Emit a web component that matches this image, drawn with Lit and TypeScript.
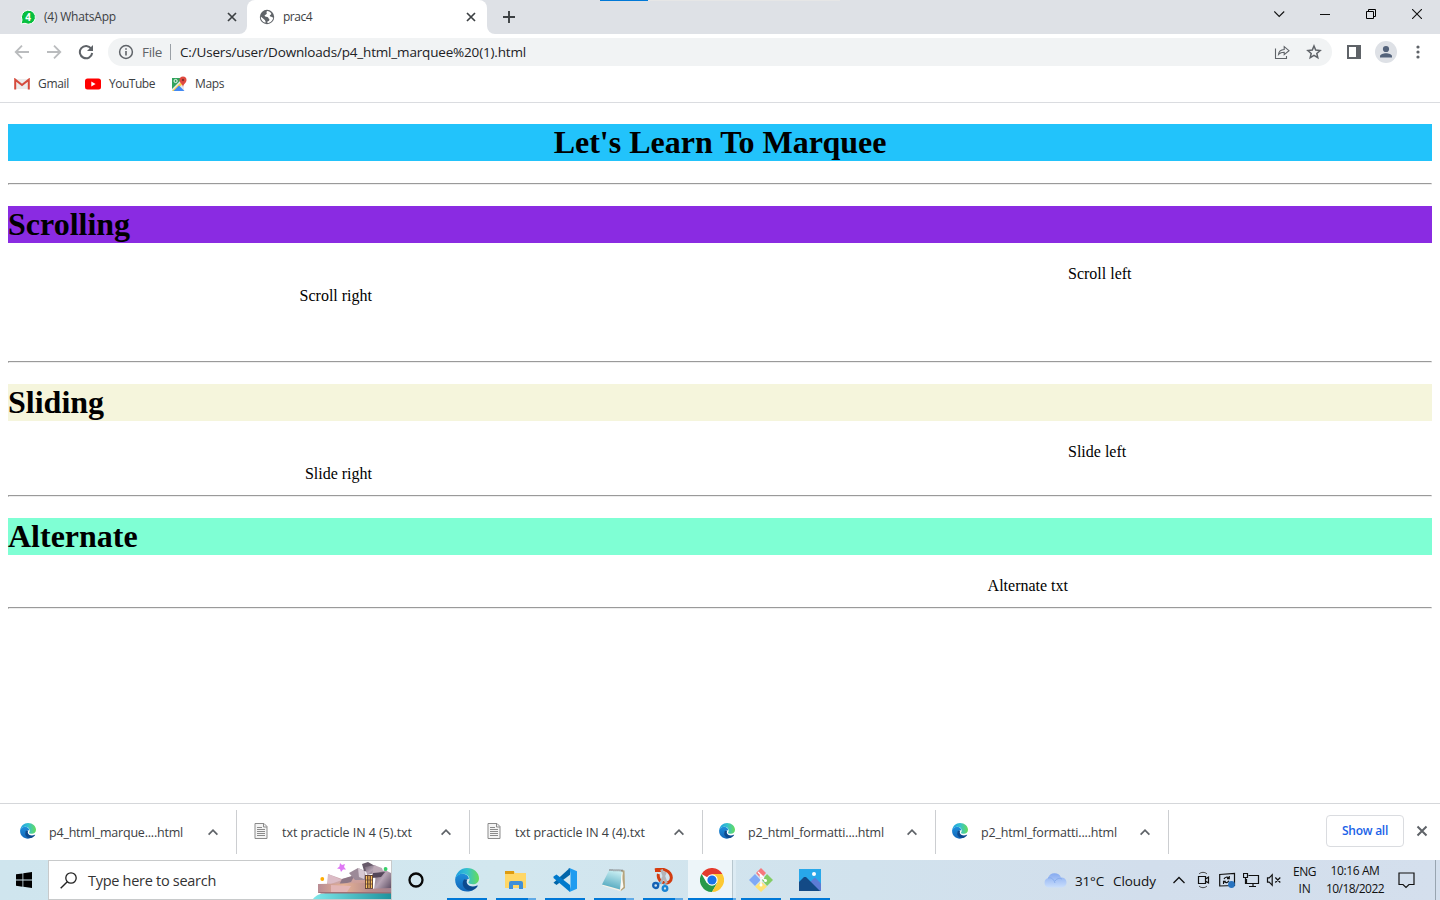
import { LitElement, html, css, svg } from "lit";
import { customElement, property } from "lit/decorators.js";

const UI_FONT = '"Open Sans", "Noto Sans", sans-serif';

/* A label whose tracking is derived from the width it has to fill. */
@customElement("fit-text")
class FitText extends LitElement {
  @property() text = "";
  @property({ type: Number }) width = 0;
  @property({ type: Number }) size = 12;
  @property({ type: Number }) weight = 400;
  static styles = css`
    :host { display: block; white-space: pre; flex: none; line-height: 16px; font-family: "Open Sans", "Noto Sans", sans-serif; }
    .t { display: block; }
  `;
  render() {
    const ctx = document.createElement("canvas").getContext("2d")!;
    ctx.font = `${this.weight} ${this.size}px ${UI_FONT}`;
    const natural = ctx.measureText(this.text).width;
    const spacing = (this.width - natural) / this.text.length;
    return html`<span class="t" style="width:${this.width}px;font-size:${this.size}px;font-weight:${this.weight};letter-spacing:${spacing.toFixed(3)}px">${this.text}</span>`;
  }
}

const label = (text: string, width: number, size = 12, weight = 400) =>
  html`<fit-text .text=${text} .width=${width} .size=${size} .weight=${weight}></fit-text>`;

const icon = (w: number, h: number, body: unknown) =>
  html`<svg class="icon" width=${w} height=${h} viewBox="0 0 ${w} ${h}" fill="none">${body}</svg>`;

const cross = (c = "#3c4043") => icon(10, 10, svg`<path d="M1 1l8 8M9 1l-8 8" stroke=${c} stroke-width="1.7"/>`);

const edge = (size: number, id: string) => html`<svg class="icon" width=${size} height=${size} viewBox="0 0 24 24">
  <defs>
    <linearGradient id="${id}a" x1="0" y1="0.3" x2="1" y2="0.3"><stop offset="0" stop-color="#1b9de2"/><stop offset=".5" stop-color="#35c1cf"/><stop offset="1" stop-color="#66dd58"/></linearGradient>
    <linearGradient id="${id}b" x1="0" y1="0" x2="0" y2="1"><stop offset="0" stop-color="#1f8fdc"/><stop offset="1" stop-color="#1266b8"/></linearGradient>
  </defs>
  <path fill="url(#${id}b)" d="M.2 11C.9 7.200 5 5.300 8.500 5.700c3.500.4 5.500 3 5.300 5.300-2.800-.6-5.600 1.400-5.300 4.600.4 4.500 5 7.300 9.500 6.300C10 26.500-.6 20.800.2 11z"/>
  <path fill="#0c4a8f" d="M9 11.500c-3.600 5 .6 12 8 10.900 2.400-.5 4.500-2.400 5.700-4.300.3-.5-.1-.8-.6-.5-4 2-8.600.9-10-2-.7-1.500-.4-3 .4-4.300z"/>
  <path fill="url(#${id}a)" d="M.2 11.200C1 4.600 6 .1 12 .1 19 .1 24 5 24 10.300c0 4-3 6-6 6-2.600 0-4.600-.9-4.600-1.700 0-.7 1.100-1 1.100-3.100C14.500 8 11.500 5.800 8 5.800c-3.800 0-6.500 2-7.800 5.400z"/>
</svg>`;

const notepage = () => icon(14, 16, svg`<path d="M1 .5h9l3 3v12H1z" fill="#f4f4f4" stroke="#8b8b8b"/><path d="M9.500 .5v3.500H13M3 4.500h5M3 6.500h8M3 8.500h8M3 10.500h8M3 12.500h8" stroke="#8b8b8b"/>`);
const chevron = () => icon(10, 7, svg`<path d="M.6 5.700L5 1.200 9.400 5.700" stroke="#5f6368" stroke-width="1.700"/>`);

@customElement("browser-chrome")
class BrowserChrome extends LitElement {
  static styles = css`
    :host { display: block; height: 103px; flex: none; color: #3c4043; }
    .icon { display: block; flex: none; }
    .strip { display: flex; height: 34px; background: #dee1e6; position: relative; }
    .load { position: absolute; left: 600px; top: 0; width: 48px; height: 1px; background: #0078d7; }
    .rest { position: absolute; left: 648px; top: 0; width: 192px; height: 1px; background: #e6e6e6; }
    .tab { display: flex; align-items: center; box-sizing: border-box; height: 34px; }
    .first { width: 247px; padding: 0 10px 0 20px; border-bottom-right-radius: 8px; background: #dee1e6; }
    .active { width: 240px; padding: 0 11px 0 12px; background: #fff; border-radius: 8px 8px 0 0; }
    .under { background: linear-gradient(#dee1e6 50%, #fff 50%); display: flex; }
    .after { display: flex; flex: 1; align-items: center; background: #dee1e6; border-bottom-left-radius: 8px; padding-left: 16px; }
    .name { margin-left: 8px; flex: 1; }
    .wide { flex: 1; }
    .win { display: flex; align-items: center; height: 28px; align-self: flex-start; padding-right: 18px; }
    .bar { display: flex; align-items: center; height: 36px; padding: 0 20px 0 14px; }
    .nav { display: flex; gap: 16px; align-items: center; }
    .omni { display: flex; flex: 1; align-items: center; box-sizing: border-box; height: 28px; border-radius: 14px; background: #f1f3f4; margin-left: 14px; padding: 0 10px 0 10px; }
    .omni .file { margin-left: 8px; color: #5f6368; }
    .sep { width: 1px; height: 16px; background: #9aa0a6; margin: 0 9px 0 8px; }
    .url { flex: 1; color: #202124; }
    .star { margin-left: 16px; }
    .side { margin-left: 15px; }
    .who { margin-left: 14px; }
    .dots { margin-left: 19px; }
    .marks { display: flex; align-items: center; height: 28px; padding: 0 14px 4px; border-bottom: 1px solid #dadce0; }
    .marks .a { margin: 0 16px 0 8px; }
    .marks .b { margin: 0 17px 0 8px; }
    .marks .c { margin-left: 8px; }
  `;
  render() {
    return html`
      <div class="strip">
        <div class="under">
          <div class="tab first">
            ${icon(16, 16, svg`<path d="M1 15l1-4A7 7 0 1 1 5 14.300z" fill="#08bf3f" stroke="#fff" stroke-width="1"/><text x="8" y="11.800" text-anchor="middle" font-size="10" font-weight="700" font-family="Open Sans, sans-serif" fill="#fff">4</text>`)}
            <div class="name">${label("(4) WhatsApp", 72)}</div>${cross()}
          </div>
          <div class="tab active">
            ${icon(16, 16, svg`<circle cx="8" cy="8" r="7.200" fill="#5f6368"/><path d="M8.200 2c-1 .7-.8 1.800-.2 2.200-.9.5-.6 1.500-1.600 1.600-1 .2-.8 1.300-.2 1.700 1.400.6 2.800-.1 3.200 1.600.1.800 1.200.7 1 1.600-.2 1-1 1.700-2 1.700V14c3.200-.3 5.600-2.600 5.800-5.600-1 .2-1.500-.5-2.400-.8-1-.2-1.400-1.200-.6-1.700.8-.5 1.300-.8 1-1.500C11.500 3.400 10 2 8.200 2zM1.800 7.500l3.700 3.200c.7.400.5 1 1 1.500v1.600C3.500 13 1.600 10.500 1.800 7.500z" fill="#fff"/>`)}
            <div class="name">${label("prac4", 29)}</div>${cross()}
          </div>
        </div>
        <div class="under wide"><div class="after">
          ${icon(12, 12, svg`<path d="M6 0v12M0 6h12" stroke="#3c4043" stroke-width="1.900"/>`)}
          <span class="wide"></span>
          <div class="win">${icon(138, 12, svg`<path d="M.3 3.500L5.200 8.500 10.200 3.500M46 6.500h10" stroke="#111" stroke-width="1.100"/><path d="M92.500 3.500h7v7h-7zM94.500 3.500v-2h7v7h-2" stroke="#000"/>`)}
            ${icon(10, 10, svg`<path d="M0 0l10 10M10 0L0 10" stroke="#111" stroke-width="1.100"/>`)}
          </div>
        </div></div>
        <i class="load"></i><i class="rest"></i>
      </div>
      <div class="bar">
        <div class="nav">
          ${icon(16, 16, svg`<path d="M15 8H2M8 1.700L1.700 8 8 14.300" stroke="#babcbe" stroke-width="1.800"/>`)}
          ${icon(16, 16, svg`<path d="M1 8h13M8 1.700L14.300 8 8 14.300" stroke="#babcbe" stroke-width="1.800"/>`)}
          ${icon(16, 16, svg`<path d="M13.200 4.600A6.200 6.200 0 1 0 14.200 9" stroke="#5f6368" stroke-width="2"/><path d="M15 1v6H9z" fill="#5f6368"/>`)}
        </div>
        <div class="omni">
          ${icon(16, 16, svg`<circle cx="8" cy="8" r="6.400" stroke="#5f6368" stroke-width="1.500"/><path d="M8 7v4.500M8 4.200v1.600" stroke="#5f6368" stroke-width="1.600"/>`)}
          <div class="file">${label("File", 20, 13.5)}</div><i class="sep"></i>
          <div class="url">${label("C:/Users/user/Downloads/p4_html_marquee%20(1).html", 346, 13.5)}</div>
          ${icon(16, 16, svg`<path d="M1.500 4.500v10h11v-2.500" stroke="#5f6368" stroke-width="1.100"/><path d="M4.500 10.500c.3-3.200 2.200-4.800 5.700-5V2.700L15 6.700l-4.800 4V8.200c-2.600 0-4.200.6-5.700 2.300z" stroke="#5f6368" stroke-width="1.100"/>`)}
          <div class="star">${icon(16, 16, svg`<path d="M8 2l1.700 4.100 4.400.4-3.300 2.900 1 4.300L8 11.400l-3.800 2.300 1-4.300-3.300-2.900 4.400-.4z" stroke="#5f6368" stroke-width="1.500"/>`)}</div>
        </div>
        <div class="side">${icon(14, 14, svg`<path d="M0 0h14v14H0zM2 2v10h7V2z" fill="#5f6368" fill-rule="evenodd"/>`)}</div>
        <div class="who">${icon(22, 22, svg`<circle cx="11" cy="11" r="11" fill="#dee1e6"/><circle cx="11" cy="8" r="3.100" fill="#53627a"/><path d="M5 16.500v-1.200c0-2 3.500-3 6-3s6 1 6 3v1.200z" fill="#53627a"/>`)}</div>
        <div class="dots">${icon(4, 14, svg`<circle cx="2" cy="2" r="1.600" fill="#5f6368"/><circle cx="2" cy="7" r="1.600" fill="#5f6368"/><circle cx="2" cy="12" r="1.600" fill="#5f6368"/>`)}</div>
      </div>
      <div class="marks">
        ${icon(16, 12, svg`<path d="M1 1h14v10H1z" fill="#ececec"/><path d="M1.200 11.500V1.600L8 7l6.800-5.400v9.900" stroke="#d54b3d" stroke-width="2"/>`)}
        <div class="a">${label("Gmail", 31)}</div>
        ${icon(16, 12, svg`<rect y=".5" width="16" height="11" rx="2.500" fill="#f00"/><path d="M6.300 3.600v4.800L10.600 6z" fill="#fff"/>`)}
        <div class="b">${label("YouTube", 46)}</div>
        ${icon(15, 16, svg`<path d="M0 2h12v13H0z" fill="#e8eaed"/><path d="M0 2h11L0 13z" fill="#31a35c"/><path d="M0 15L12 3l2 2L3 15z" fill="#fdd249"/><path d="M1.500 15l5.500-5.500L12.500 15z" fill="#4289f2"/><circle cx="3.600" cy="5" r="1.600" stroke="#fff" stroke-width=".9"/><path d="M11 11c-.3-3-3.500-4-3.500-7a3.500 3.500 0 0 1 7 0c0 3-3.200 4-3.500 7z" fill="#e04a3f"/><circle cx="11" cy="4" r="1.200" fill="#882f28"/>`)}
        <div class="c">${label("Maps", 29)}</div>
      </div>`;
  }
}

@customElement("marquee-page")
class MarqueePage extends LitElement {
  static styles = css`
    :host { display: block; flex: 1; padding: 21px 8px 0; font: 16px/18px "Liberation Serif", serif; color: #000; background: #fff; }
    h1 { margin: 0; height: 37px; font: bold 32px/37px "Liberation Serif", serif; }
    hr { margin: 22px 0 21px; border: solid; border-width: 1px; border-color: #9a9a9a #eee #eee #9a9a9a; }
    .title { background: #22c3fb; text-align: center; }
    .scrolling { background: #8a2be2; }
    .sliding { background: #f5f5dc; }
    .alternate { background: #7fffd4; }
    .runs { display: grid; row-gap: 4px; padding-top: 22px; align-content: start; box-sizing: border-box; }
    .r1 { height: 96px; }
    .r2 { height: 52px; }
    .r3 { height: 30px; }
    .left { padding-left: 1060px; }
    .right { width: 364px; text-align: right; }
    .alt { width: 1060px; text-align: right; }
  `;
  render() {
    return html`
      <h1 class="title">Let's Learn To Marquee</h1><hr />
      <h1 class="scrolling">Scrolling</h1>
      <div class="runs r1"><div class="left">Scroll left</div><div class="right">Scroll right</div></div><hr />
      <h1 class="sliding">Sliding</h1>
      <div class="runs r2"><div class="left">Slide left</div><div class="right">Slide right</div></div><hr />
      <h1 class="alternate">Alternate</h1>
      <div class="runs r3"><div class="alt">Alternate txt</div></div><hr />`;
  }
}

@customElement("download-shelf")
class DownloadShelf extends LitElement {
  static styles = css`
    :host { display: flex; flex: none; box-sizing: border-box; height: 57px; border-top: 1px solid #d5d7da; align-items: center; background: #fff; color: #3c4043; padding-right: 12px; }
    .icon { display: block; flex: none; }
    .item { display: flex; align-items: center; box-sizing: border-box; width: 233px; height: 44px; border-right: 1px solid #ccced1; padding: 0 18px 0 16px; }
    .item:first-child { width: 237px; padding-left: 20px; }
    .pic { width: 16px; display: flex; justify-content: center; margin: 0 13px 2px 0; }
    .name { flex: 1; padding-top: 1px; }
    .gap { flex: 1; }
    .all { display: flex; align-items: center; justify-content: center; box-sizing: border-box; width: 78px; height: 32px; border: 1px solid #dadce0; border-radius: 4px; color: #1a62e8; margin: 0 12px 2px 0; }
    .shut { padding-bottom: 2px; }
  `;
  render() {
    const files: [string, number, boolean][] = [
      ["p4_html_marque....html", 134, true],
      ["txt practicle IN 4 (5).txt", 130, false],
      ["txt practicle IN 4 (4).txt", 130, false],
      ["p2_html_formatti....html", 136, true],
      ["p2_html_formatti....html", 136, true],
    ];
    return html`${files.map(([name, w, web], i) => html`<div class="item"><div class="pic">${web ? edge(16, "d" + i) : notepage()}</div><div class="name">${label(name, w, 12.5)}</div>${chevron()}</div>`)}
      <span class="gap"></span><div class="all">${label("Show all", 46, 12, 600)}</div><div class="shut">${icon(12, 12, svg`<path d="M1.500 1.500l9 9M10.500 1.500l-9 9" stroke="#5f6368" stroke-width="2"/>`)}</div>`;
  }
}

const apps = [
  edge(24, "tb"),
  icon(24, 24, svg`<path d="M1 3h9l1 2h11v15H1z" fill="#ffd668"/><path d="M1 3h9v3H1z" fill="#dd9b10"/><path d="M1 7h21v12H1z" fill="#ffd766"/><path d="M5 21v-6a2 2 0 0 1 2-2h10a2 2 0 0 1 2 2v6h-4v-4H9v4z" fill="#3f8fd8"/>`),
  icon(24, 24, svg`<path d="M17 0v6.800L3.500 17 .5 14.700 16.500.2z" fill="#0065a9"/><path d="M.5 8.500l3-2L17 17v7L.5 10z" fill="#007acc"/><path d="M16.500 0L24 3.200v17.600L16.500 24l1-6V6z" fill="#1f9cf0"/>`),
  html`<svg class="icon" width="24" height="24" viewBox="0 0 24 24" fill="none"><defs><linearGradient id="np" x1=".6" y1="0" x2=".3" y2="1"><stop stop-color="#c8eef2"/><stop offset="1" stop-color="#4aa3bb"/></linearGradient></defs><path d="M19 2l3.500.500.500 17.500-4.500 3.200z" fill="#b5a47c"/><path d="M0 17.500l18.500 5.700L21 4z" fill="#f5f2e8"/><path d="M7 2.500L20.500 3.500 18 21.500 0 16.500z" fill="url(#np)"/><path d="M19.500 4l2 15-3 3z" fill="#fbfaf4"/><path d="M7.500 2l14 .5" stroke="#777" stroke-dasharray="1 1" stroke-width="2"/></svg>`,
  icon(24, 24, svg`<path d="M4 2.200C12-.800 20 3 20.300 9.500c.2 4-3.300 6-7 5.300C8.500 14 6.500 9 7.500 6" stroke="#d23c10" stroke-width="3"/><path d="M4 .5h8v3.500H4z" fill="#d83b0d"/><path d="M10.500 1.500l5 14M14.500 4l-5 12" stroke="#b4b4b8" stroke-width="2.600"/><path d="M10 14.500l-3 1.500M13 15.500l1.500 3" stroke="#5bb8ed" stroke-width="2"/><circle cx="4.700" cy="17.500" r="2.500" stroke="#1461b4" stroke-width="2.300"/><circle cx="14" cy="20.500" r="2.300" stroke="#1984d4" stroke-width="2.300"/>`),
  icon(24, 24, svg`<circle cx="12" cy="12" r="12" fill="#fff"/><path d="M12 12L1.600 6A12 12 0 0 1 22.400 6z" fill="#e33b2e"/><path d="M1.600 6A12 12 0 0 0 12 24l5.200-9L12 12 6.800 15z" fill="#27984a"/><path d="M22.400 6H12l5.200 9L12 24A12 12 0 0 0 22.400 6z" fill="#fcc934"/><circle cx="12" cy="12" r="5.700" fill="#fff"/><circle cx="12" cy="12" r="4.600" fill="#1a73e8"/>`),
  icon(24, 24, svg`<path d="M12 0l5 5-5 5.500L7 5z" fill="#f7787c"/><path d="M6 6l5.500 6L6 18 0 12z" fill="#80a9f6"/><path d="M18 6l6 6-6 6-5-6z" fill="#83cd65"/><path d="M12 13.500l6 5-6 5.500-6-5.500z" fill="#ffe273"/><path d="M9 4l6 6M12 8v10M13 10l4 3" stroke="#fff" stroke-width="1.300"/><circle cx="12" cy="8" r="1.500" fill="#fff"/><circle cx="12" cy="17" r="1.500" fill="#fff"/><circle cx="16.500" cy="12.500" r="1.500" fill="#fff"/>`),
  icon(24, 24, svg`<path d="M1 1h22v22H1z" fill="#28a8ea"/><path d="M12 14l5-4.500 6 6V23H12z" fill="#5c7bd5"/><path d="M1 14l5-5 2 0 14 14H1z" fill="#134a86"/><circle cx="16" cy="6" r="2" fill="#fff"/>`),
];

@customElement("task-bar")
class TaskBar extends LitElement {
  static styles = css`
    :host { display: flex; flex: none; height: 40px; align-items: center; background: linear-gradient(90deg, #cfe5ee 0, #d2e7ef 35%, #d1e2ed 60%, #d2deec 80%, #d4dfed); color: #111; }
    .icon { display: block; flex: none; }
    .start { width: 48px; display: flex; justify-content: center; }
    .search { display: flex; align-items: center; box-sizing: border-box; width: 344px; height: 40px; border: 1px solid #c8cacb; background: #fff; padding-left: 11px; color: #333; }
    .query { margin-left: 11px; flex: 1; padding-top: 1px; }
    .cortana { width: 48px; display: flex; justify-content: center; margin-right: 7px; }
    .app { display: flex; flex: none; align-items: center; justify-content: center; width: 40px; height: 40px; margin-right: 9px; background: linear-gradient(#0078d7, #0078d7) 0 38px / 100% 2px no-repeat; }
    .multi { background: linear-gradient(90deg, #0078d7 32px, #60aae6 32px) 0 38px / 100% 2px no-repeat; }
    .on { width: 49px; margin: 0 4px 0 -4px; box-sizing: border-box; padding-right: 2px;
      background: linear-gradient(90deg, #0078d7 45px, #60aae6 45px) 0 38px / 48px 2px no-repeat, linear-gradient(90deg, #edf5f9 44px, #b7c7cf 44px, #b7c7cf 45px, #dcebf3 45px) 0 0 / 48px 40px no-repeat; }
    .gap { flex: 1; }
    .temp { margin: 2px 9px 0 8px; }
    .sky { margin: 2px 17px 0 0; }
    .tray { display: flex; align-items: center; gap: 7px; }
    .tray .icon:first-child { margin-right: 2px; }
    .tray .icon:last-child { margin-left: -1px; }
    .lang, .clock { display: flex; flex-direction: column; align-items: center; gap: 1px; }
    .lang { margin-left: 11px; }
    .clock { margin: 0 14px 0 10px; gap: 2px; }
    .end { width: 4px; height: 40px; border-left: 1px solid #98a4b0; margin-left: 20px; }
  `;
  render() {
    return html`
      <div class="start">${icon(16, 16, svg`<path d="M0 2.300l6.500-.9v6.200H0zM7.300 1.200L16 0v7.600H7.300zM0 8.400h6.500v6.300L0 13.800zM7.300 8.400H16V16l-8.700-1.200z" fill="#000"/>`)}</div>
      <div class="search">
        ${icon(17, 17, svg`<circle cx="11" cy="6" r="5.200" stroke="#222" stroke-width="1.300"/><path d="M7.300 9.700L.7 16.300" stroke="#222" stroke-width="1.400"/>`)}
        <div class="query">${label("Type here to search", 128, 14.5)}</div>
        ${icon(78, 38, svg`<defs>
            <linearGradient id="m1"><stop stop-color="#b98c94"/><stop offset=".35" stop-color="#e5b295"/><stop offset=".7" stop-color="#b98d8c"/><stop offset="1" stop-color="#a4818e"/></linearGradient>
            <linearGradient id="m2" x2="1" y2="1"><stop stop-color="#6b5c6c"/><stop offset=".5" stop-color="#b6a4b4"/><stop offset="1" stop-color="#5a4a60"/></linearGradient>
            <linearGradient id="m4" y2="1"><stop stop-color="#c9b0bd"/><stop offset="1" stop-color="#d19a8c"/></linearGradient>
            <linearGradient id="m3"><stop stop-color="#7fe8ea"/><stop offset="1" stop-color="#1e939e"/></linearGradient></defs>
          <path d="M0 38c3-4 8-6 15-6h63v6z" fill="url(#m3)"/>
          <path d="M15 13l14 5 12-3 11 2v8H14z" fill="url(#m4)"/><path d="M15 13l14 6-14 5z" fill="#dcbcc6"/><path d="M29 18l13-4-4 7-12 3z" fill="#8d7786"/>
          <path d="M36 12l9-5 7 3 1 9H42z" fill="#9c8a98"/><path d="M45 7l7 3-1 8-5-2z" fill="#d6c8d2"/>
          <path d="M49 3l6-2 7 4-2 7-9-2z" fill="#685a6a"/><path d="M52 6l10-2 4 7-12 3z" fill="url(#m2)"/>
          <path d="M61 4l8 3 2 6-8 5-4-5z" fill="#bda9b6"/><path d="M63 13l9-4-1-3 3 4 4 2v17H61z" fill="url(#m2)"/><path d="M60 12l12-1-4 5-9 1z" fill="#544659"/>
          <path d="M52 14h8v14h-8z" fill="#5f4034"/><path d="M53.500 15v12M56 15v12M58.500 15v12" stroke="#ffc660" stroke-width="1.200"/><path d="M52 19h8M52 23h8" stroke="#5f4034" stroke-width=".7"/>
          <path d="M5 23l47-1v6l26-1v5H5z" fill="url(#m1)"/><path d="M18 24l20 1-4 6H18z" fill="#e3b6b6"/><path d="M5 31h73v1.500H8z" fill="#a06f75"/>
          <path d="M27 2l2 2 3-1-1 3 2 2.500-3 0-2 2.500-1-3-3-.5 2.500-2z" fill="#df78f5"/><circle cx="9.300" cy="18" r="1.900" fill="#ffac00"/><circle cx="72.600" cy="8" r="1.900" fill="#37cf68"/>`)}
      </div>
      <div class="cortana">${icon(16, 16, svg`<circle cx="8" cy="8" r="6.500" stroke="#080808" stroke-width="2.300"/>`)}</div>
      ${apps.map((a, i) => html`<div class="app ${[1, 3, 4].includes(i) ? "multi" : i === 5 ? "on" : ""}">${a}</div>`)}
      <span class="gap"></span>
      ${icon(24, 16, svg`<defs><linearGradient id="cl" x2="0" y2="1"><stop stop-color="#86aaf0"/><stop offset="1" stop-color="#c9defc"/></linearGradient></defs><path d="M5 15.500a5 5 0 0 1 0-9.500 7 7 0 0 1 13-.5 5 5 0 0 1 1 10z" fill="url(#cl)"/><path d="M5 6c4-1 6 2 7 5M12 9c2-3 5-3 7-2" stroke="#7fa6e8" stroke-width=".8"/>`)}
      <div class="temp">${label("31°C", 29, 13.5)}</div><div class="sky">${label("Cloudy", 43, 13.5)}</div>
      <div class="tray">
        ${icon(12, 8, svg`<path d="M.5 7L6 1.500 11.500 7" stroke="#111" stroke-width="1.300"/>`)}
        <svg class="icon" width="18" height="18" viewBox="-3 0 18 18" fill="none"><path d="M2 3C4 .8 8 .8 10 3M2 15c2 2.200 6 2.200 8 0" stroke="#444" stroke-width="1"/><path d="M1.500 5.500h7v7h-7zM8.500 8l3-2v6l-3-2" stroke="#111" stroke-width="1.200"/></svg>
        ${icon(17, 18, svg`<path d="M.7 3.500L15.500 2.500v12L.7 15zM.7 3.500v11.500" stroke="#111" stroke-width="1.200"/><path d="M5 8c.8-2.200 3.500-2.400 5-.8M10.300 5v2.600H8M9.800 9.800C9 12 6.500 12.200 4.800 10.700M4.500 13v-2.600h2.300" stroke="#111" stroke-width="1.100"/><circle cx="12.500" cy="13.500" r="3.400" fill="#2873bf"/>`)}
        ${icon(17, 16, svg`<path d="M5.500 3.500h10v8h-12V7M10 11.500v3M6 14.500h7M.5 1.500h4v4h-4zM2.500 5.500v6h2" stroke="#111" stroke-width="1.200"/>`)}
        ${icon(16, 14, svg`<path d="M1.500 4.800h1.700l3-3v10.400l-3-3H1.500zM9.300 4.500l5 5M14.300 4.500l-5 5" stroke="#111" stroke-width="1.200"/>`)}
      </div>
      <div class="lang">${label("ENG", 23, 12)}${label("IN", 12, 12)}</div>
      <div class="clock">${label("10:16 AM", 49, 12)}${label("10/18/2022", 58, 12)}</div>
      ${icon(17, 17, svg`<path d="M1 1h15v11.500h-5l-3 3-3-3H1z" stroke="#111" stroke-width="1.200"/>`)}
      <i class="end"></i>`;
  }
}

@customElement("app-root")
class AppRoot extends LitElement {
  static styles = css`
    :host { display: flex; flex-direction: column; width: 1440px; height: 900px; overflow: hidden; background: #fff; }
  `;
  render() {
    return html`<browser-chrome></browser-chrome><marquee-page></marquee-page><download-shelf></download-shelf><task-bar></task-bar>`;
  }
}
